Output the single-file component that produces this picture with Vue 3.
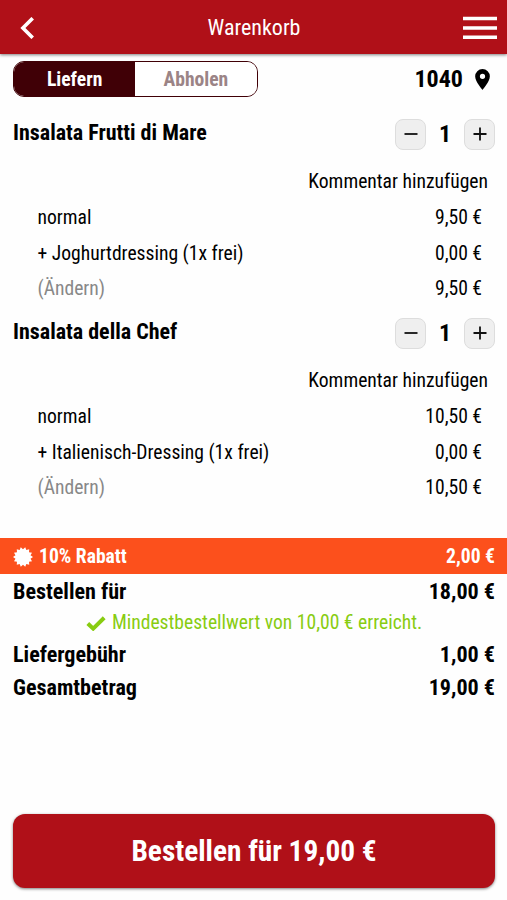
<template>
  <div class="page">
    <header class="topbar">
      <button class="icon-btn" aria-label="Zurück">
        <svg class="back" viewBox="0 0 14 22" aria-hidden="true">
          <path d="M12.2 1.2 2.4 11l9.8 9.8" />
        </svg>
      </button>
      <h1 class="title">Warenkorb</h1>
      <button class="icon-btn" aria-label="Menü">
        <svg class="menu" viewBox="0 0 34 24" aria-hidden="true">
          <path d="M0 2.5h34M0 12h34M0 21.3h34" />
        </svg>
      </button>
    </header>

    <div class="delivery">
      <div class="toggle">
        <button
          v-for="mode in modes"
          :key="mode"
          class="toggle-btn"
          :class="{ active: mode === activeMode }"
          @click="activeMode = mode"
        >{{ mode }}</button>
      </div>
      <div class="zip">
        <span>1040</span>
        <svg class="pin" viewBox="0 0 14 20" aria-hidden="true">
          <path fill-rule="evenodd" d="M7 0a7 7 0 0 0-7 7c0 5.2 7 13 7 13s7-7.8 7-13a7 7 0 0 0-7-7zm0 4.5a2.5 2.5 0 1 1 0 5 2.5 2.5 0 0 1 0-5z" />
        </svg>
      </div>
    </div>

    <section v-for="item in items" :key="item.name" class="item">
      <div class="item-head">
        <h2 class="item-name">{{ item.name }}</h2>
        <div class="stepper">
          <button class="step" aria-label="Weniger" @click="item.count--">
            <svg viewBox="0 0 14 14" aria-hidden="true"><path d="M.5 7h13" /></svg>
          </button>
          <span class="count">{{ item.count }}</span>
          <button class="step" aria-label="Mehr" @click="item.count++">
            <svg viewBox="0 0 14 14" aria-hidden="true"><path d="M.5 7h13M7 .5v13" /></svg>
          </button>
        </div>
      </div>
      <div class="comment">Kommentar hinzufügen</div>
      <div v-for="row in item.rows" :key="row.label" class="row">
        <span :class="{ muted: row.muted }">{{ row.label }}</span>
        <span>{{ row.price }}</span>
      </div>
    </section>

    <div class="discount">
      <svg class="badge" viewBox="-10 -10 20 20" aria-hidden="true">
        <polygon :points="badgePoints" />
      </svg>
      <span class="discount-label">10% Rabatt</span>
      <span>2,00 €</span>
    </div>

    <div class="totals">
      <div class="total"><span>Bestellen für</span><span>18,00 €</span></div>
      <p class="minimum">
        <svg class="check" viewBox="0 0 20 15" aria-hidden="true">
          <path d="M1.8 7.5 7.2 12.6 18.2 1.8" />
        </svg>
        <span>Mindestbestellwert von 10,00 € erreicht.</span>
      </p>
      <div class="total"><span>Liefergebühr</span><span>1,00 €</span></div>
      <div class="total"><span>Gesamtbetrag</span><span>19,00 €</span></div>
    </div>

    <button class="order">Bestellen für 19,00 €</button>
  </div>
</template>

<script setup>
import { ref } from 'vue';

const modes = ['Liefern', 'Abholen'];
const activeMode = ref('Liefern');

const items = ref([
  {
    name: 'Insalata Frutti di Mare',
    count: 1,
    rows: [
      { label: 'normal', price: '9,50 €' },
      { label: '+ Joghurtdressing (1x frei)', price: '0,00 €' },
      { label: '(Ändern)', price: '9,50 €', muted: true },
    ],
  },
  {
    name: 'Insalata della Chef',
    count: 1,
    rows: [
      { label: 'normal', price: '10,50 €' },
      { label: '+ Italienisch-Dressing (1x frei)', price: '0,00 €' },
      { label: '(Ändern)', price: '10,50 €', muted: true },
    ],
  },
]);

// star with 14 short spikes
const badgePoints = Array.from({ length: 28 }, (_, i) => {
  const r = i % 2 ? 7.7 : 10;
  const a = (i * Math.PI) / 14;
  return `${(r * Math.cos(a)).toFixed(2)},${(r * Math.sin(a)).toFixed(2)}`;
}).join(' ');
</script>

<style>
body {
  margin: 0;
  background: #fefefe;
}
</style>

<style scoped>
.page {
  display: flex;
  flex-direction: column;
  height: 900px;
  box-sizing: border-box;
  padding-bottom: 12px;
  font-family: "Roboto Condensed", Roboto, sans-serif;
  font-stretch: 75%;
  font-size: 19.6px;
  color: #000;
}

button {
  font: inherit;
  font-stretch: inherit;
  border: 0;
  padding: 0;
  cursor: pointer;
}

svg { display: block; }

.topbar {
  display: flex;
  align-items: center;
  justify-content: space-between;
  height: 54px;
  flex: none;
  box-sizing: border-box;
  padding: 1px 10px 0 20px;
  background: #b01018;
  box-shadow: 0 1px 3px rgba(0, 0, 0, .5);
}

.icon-btn {
  width: 34px;
  background: none;
}

.back { width: 15px; height: 22px; }
.menu { width: 34px; height: 24px; }
.back path,
.menu path { fill: none; stroke: #fff; stroke-width: 3.6; }

.title {
  margin: 0 9px 0 0;
  font-size: 22px;
  line-height: 26px;
  font-weight: 450;
  color: #fff;
}

.delivery {
  display: flex;
  justify-content: space-between;
  align-items: center;
  height: 36px;
  padding: 7px 17px 0 13px;
}

.toggle {
  display: flex;
  box-sizing: border-box;
  width: 244.5px;
  height: 36.5px;
  border: 1px solid #400006;
  border-radius: 11px;
  overflow: hidden;
}

.toggle-btn {
  flex: 1;
  font-size: 19.6px;
  font-weight: 700;
  color: #9b8486;
  background: #fff;
}
.toggle-btn.active { color: #fff; background: #400006; }

.zip {
  display: flex;
  align-items: center;
  gap: 12px;
  font-size: 24px;
  font-weight: 700;
}

.pin { width: 15px; height: 21px; }

.item {
  height: 199px;
  padding: 0 12px 0 13px;
}

.item-head {
  display: flex;
  justify-content: space-between;
  height: 66px;
  padding-top: 22px;
  box-sizing: border-box;
}

.item-name {
  margin: 1px 0 0;
  font-size: 22px;
  line-height: 26px;
  font-weight: 700;
}

.stepper {
  display: flex;
  align-items: center;
  height: 30px;
}

.step {
  display: grid;
  place-items: center;
  box-sizing: border-box;
  width: 31px;
  height: 31px;
  border: 1px solid #ddd;
  border-radius: 8px;
  background: #efefef;
}
.step svg { width: 14px; height: 14px; }
.step path { fill: none; stroke: #111; stroke-width: 1.8; }

.count {
  width: 38px;
  text-align: center;
  font-size: 24px;
  font-weight: 700;
}

.comment {
  height: 37px;
  padding-right: 7px;
  line-height: 37px;
  text-align: right;
}

.row {
  display: flex;
  justify-content: space-between;
  height: 35.5px;
  line-height: 36px;
  padding: 0 13px 0 24.5px;
}

.muted { color: #888; }

.discount {
  display: flex;
  align-items: center;
  height: 36px;
  margin-top: 43px;
  padding: 1px 12px 0 13px;
  box-sizing: border-box;
  color: #fff;
  background: #fc501c;
  font-weight: 700;
}

.badge { width: 20px; height: 20px; margin-right: 6px; fill: #fff; }
.discount-label { flex: 1; }

.totals { padding: 1px 12px 0 13px; }

.total {
  display: flex;
  justify-content: space-between;
  line-height: 33px;
  font-size: 22.1px;
  font-weight: 700;
}

.minimum {
  display: flex;
  align-items: center;
  justify-content: center;
  gap: 6px;
  margin: 0;
  line-height: 30px;
  color: #8c1;
}

.check { width: 20px; height: 15px; }
.check path { fill: none; stroke: currentColor; stroke-width: 4; }

.order {
  height: 74px;
  margin: auto 12px 0 13px;
  border-radius: 12px;
  color: #fff;
  background: #b01018;
  box-shadow: 0 1px 3px rgba(0, 0, 0, .5);
  font-size: 29.3px;
  font-weight: 700;
}
</style>
